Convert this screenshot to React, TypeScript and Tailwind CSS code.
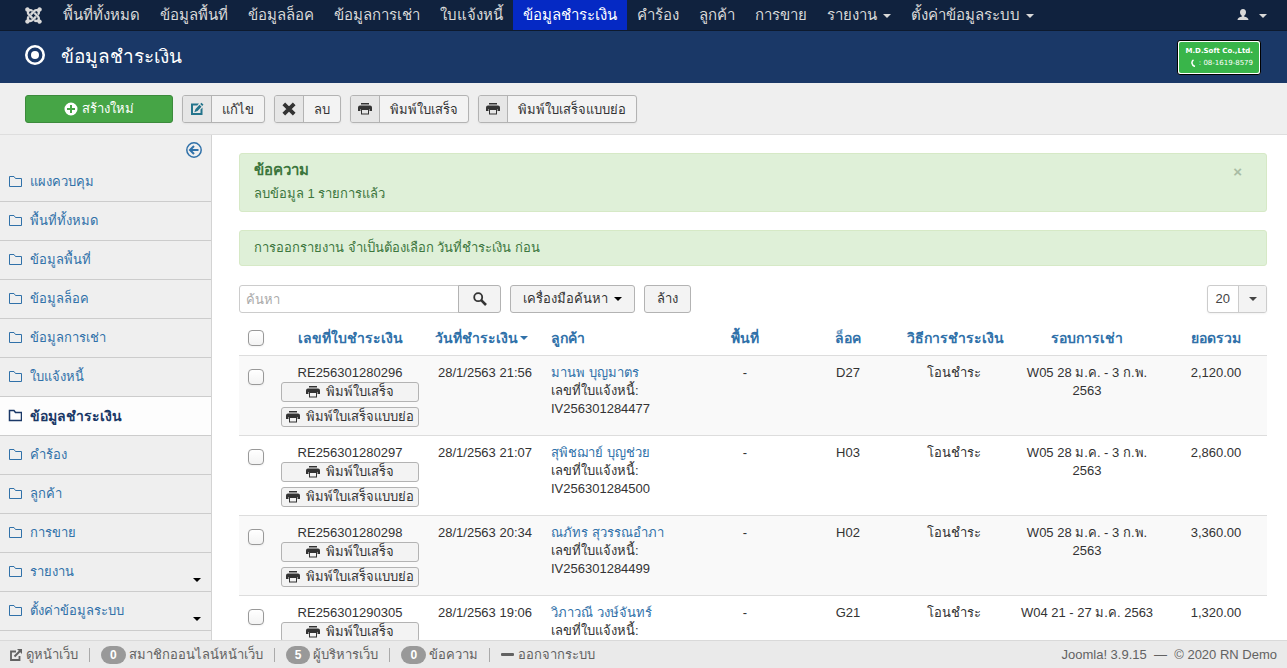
import type { ReactNode } from 'react';
import { FaJoomla } from 'react-icons/fa';

interface MenuItem {
  label: string;
  active?: boolean;
  dropdown?: boolean;
}

const menuItems: MenuItem[] = [
  { label: 'พื้นที่ทั้งหมด' },
  { label: 'ข้อมูลพื้นที่' },
  { label: 'ข้อมูลล็อค' },
  { label: 'ข้อมูลการเช่า' },
  { label: 'ใบแจ้งหนี้' },
  { label: 'ข้อมูลชำระเงิน', active: true },
  { label: 'คำร้อง' },
  { label: 'ลูกค้า' },
  { label: 'การขาย' },
  { label: 'รายงาน', dropdown: true },
  { label: 'ตั้งค่าข้อมูลระบบ', dropdown: true },
];

const sidebarItems: MenuItem[] = [{ label: 'แผงควบคุม' }, ...menuItems];

interface Payment {
  receipt: string;
  date: string;
  customer: string;
  invoice: string;
  lock: string;
  period: string;
  total: string;
}

const payments: Payment[] = [
  {
    receipt: 'RE256301280296',
    date: '28/1/2563 21:56',
    customer: 'มานพ บุญมาตร',
    invoice: 'IV256301284477',
    lock: 'D27',
    period: 'W05 28 ม.ค. - 3 ก.พ. 2563',
    total: '2,120.00',
  },
  {
    receipt: 'RE256301280297',
    date: '28/1/2563 21:07',
    customer: 'สุพิชฌาย์ บุญช่วย',
    invoice: 'IV256301284500',
    lock: 'H03',
    period: 'W05 28 ม.ค. - 3 ก.พ. 2563',
    total: '2,860.00',
  },
  {
    receipt: 'RE256301280298',
    date: '28/1/2563 20:34',
    customer: 'ณภัทร สุวรรณอำภา',
    invoice: 'IV256301284499',
    lock: 'H02',
    period: 'W05 28 ม.ค. - 3 ก.พ. 2563',
    total: '3,360.00',
  },
  {
    receipt: 'RE256301290305',
    date: '28/1/2563 19:06',
    customer: 'วิภาวณี วงษ์จันทร์',
    invoice: '',
    lock: 'G21',
    period: 'W04 21 - 27 ม.ค. 2563',
    total: '1,320.00',
  },
];

function Caret({ className = '' }: { className?: string }) {
  return (
    <svg className={`inline-block h-1 w-2 shrink-0 ${className}`} viewBox="0 0 8 4" fill="currentColor" aria-hidden="true">
      <path d="M0 0h8L4 4z" />
    </svg>
  );
}

function PrintIcon() {
  return (
    <svg className="h-3.5 w-3.5 shrink-0" viewBox="0 0 14 14" fill="currentColor" aria-hidden="true">
      <path d="M3 1h8v1.500H3z" />
      <path d="M2 3.500h10a2 2 0 0 1 2 2V9h-2.500V7h-9v2H0V5.500a2 2 0 0 1 2-2z" />
      <path fillRule="evenodd" d="M3 6.500h8V12.500H3zM4 8v3.500h6V8z" />
    </svg>
  );
}

function PlusIcon() {
  return (
    <svg className="h-3.5 w-3.5 shrink-0" viewBox="0 0 14 14" fill="currentColor" aria-hidden="true">
      <path fillRule="evenodd" d="M7 .5a6.500 6.500 0 1 1 0 13 6.500 6.500 0 0 1 0-13zM6 3v3H3v2h3v3h2V8h3V6H8V3z" />
    </svg>
  );
}

function EditIcon() {
  return (
    <svg className="h-3.5 w-3.5 shrink-0" viewBox="0 0 14 14" fill="currentColor" aria-hidden="true">
      <path d="M1 1.500h8L7.200 3.500H3v7.500h7.500V7.500l2-2V13H1z" />
      <path d="m11.500.8 2 2-1.300 1.300-2-2zM9.500 2.800l2 2L7.500 9l-3.200 1.200L5.500 7z" />
    </svg>
  );
}

function DeleteIcon() {
  return (
    <svg className="h-3.5 w-3.5 shrink-0" viewBox="0 0 14 14" aria-hidden="true">
      <path d="M1.800 1.800l10.400 10.400M12.200 1.800 1.800 12.200" stroke="currentColor" strokeWidth="3.800" />
    </svg>
  );
}

function SearchIcon() {
  return (
    <svg className="h-3.5 w-3.5 shrink-0" viewBox="0 0 14 14" fill="none" stroke="currentColor" aria-hidden="true">
      <circle cx="5.200" cy="5.200" r="4" strokeWidth="1.800" />
      <path d="m8.200 8.200 4.800 4.800" strokeWidth="2.600" />
    </svg>
  );
}

function BackIcon() {
  return (
    <svg className="h-4 w-4" viewBox="0 0 16 16" fill="none" stroke="currentColor" aria-hidden="true">
      <circle cx="8" cy="8" r="7.200" strokeWidth="1.500" />
      <path d="M12.500 8H4.500M8 4 4 8l4 4" strokeWidth="2" />
    </svg>
  );
}

function FolderIcon({ bold }: { bold?: boolean }) {
  return (
    <svg className="h-3.5 w-3.5 shrink-0" viewBox="0 0 14 14" fill="none" stroke="currentColor" strokeWidth={bold ? 1.5 : 1} aria-hidden="true">
      <path d="M1.500 11.500v-10h4.500l1.500 2h6v8z" />
    </svg>
  );
}

function UserIcon() {
  return (
    <svg className="h-3 w-3 shrink-0" viewBox="0 0 12 12" fill="currentColor" aria-hidden="true">
      <path d="M6 0c2 0 3 1.300 3 3.200C9 4.800 8.300 6 7.300 6.600v1.200c2.200.3 4.200 1.200 4.200 3.200H.5c0-2 2-2.900 4.200-3.200V6.600C3.700 6 3 4.800 3 3.200 3 1.300 4 0 6 0z" />
    </svg>
  );
}

function ExternalIcon() {
  return (
    <svg className="h-3 w-3 shrink-0" viewBox="0 0 12 12" fill="none" stroke="currentColor" aria-hidden="true">
      <path d="M6 2.500H1v8.500h8.500V7" strokeWidth="1.800" />
      <path d="M4.500 7.500 10 2" strokeWidth="2" />
      <path d="M7 0h5v5z" fill="currentColor" stroke="none" />
    </svg>
  );
}

function ToolbarButton({ icon, iconClass = '', children }: { icon: ReactNode; iconClass?: string; children: ReactNode }) {
  return (
    <button className="flex h-7 items-stretch overflow-hidden rounded-[3px] border border-[#b3b3b3] bg-[#f3f3f3] text-[13px] shadow-xs">
      <span className={`flex w-[29px] items-center justify-center border-r border-[#b3b3b3] bg-[#e6e6e6] ${iconClass}`}>{icon}</span>
      <span className="px-2.5 leading-7">{children}</span>
    </button>
  );
}

function PrintButton({ children }: { children: ReactNode }) {
  return (
    <button className="flex h-5 w-full items-center justify-center gap-1.5 rounded-[3px] border border-[#b3b3b3] bg-[#f3f3f3] text-[13px] leading-[18px] whitespace-nowrap">
      <PrintIcon />
      {children}
    </button>
  );
}

function Checkbox({ label }: { label: string }) {
  return (
    <input
      type="checkbox"
      aria-label={label}
      className="mx-auto block h-4 w-4 appearance-none rounded-[4px] border border-[#999] bg-linear-to-b from-white to-[#f3f3f3] shadow-xs"
    />
  );
}

function TopBar() {
  return (
    <nav className="flex h-[31px] shrink-0 items-stretch border-b border-[#0d1a2e] bg-[#10223e] text-[15px] leading-[30px] text-[#d9d9d9]">
      <a href="#" aria-label="Joomla" className="flex items-center pr-2.5 pl-6">
        <FaJoomla className="h-[19px] w-[19px]" />
      </a>
      {menuItems.map((item) => (
        <a
          key={item.label}
          href="#"
          className={`flex items-center px-2.5 whitespace-nowrap ${item.active ? 'bg-[#0529c4] text-white' : ''}`}
        >
          {item.label}
          {item.dropdown && <Caret className="mt-0.5 ml-1.5" />}
        </a>
      ))}
      <button aria-label="เมนูผู้ใช้" className="mr-5 ml-auto flex items-center gap-2.5">
        <UserIcon />
        <Caret className="mt-0.5" />
      </button>
    </nav>
  );
}

function Header() {
  return (
    <header className="flex h-[52px] shrink-0 items-center bg-[#1a3867] pr-[26px] pl-[25px] text-white">
      <svg className="mb-1 h-5 w-5" viewBox="0 0 20 20" aria-hidden="true">
        <circle cx="10" cy="10" r="8.700" fill="none" stroke="currentColor" strokeWidth="2.600" />
        <circle cx="10" cy="10" r="4" fill="currentColor" />
      </svg>
      <h1 className="ml-4 text-[19px] leading-9">ข้อมูลชำระเงิน</h1>
      <div className="ml-auto rounded-[3px] border border-black bg-white p-px">
        <div className="flex h-[31px] w-20 flex-col items-end justify-center rounded-[2px] bg-[#39b54a] pr-1.5 font-['DejaVu_Sans','Liberation_Sans',sans-serif] text-[7px] leading-3 whitespace-nowrap">
          <b>M.D.Soft Co.,Ltd.</b>
          <span className="flex items-center gap-px">
            <svg className="h-2 w-2" viewBox="0 0 8 8" fill="none" stroke="currentColor" aria-hidden="true">
              <path d="M3.500 1C1 2.500 1.500 6.500 5 7.500" strokeWidth="1.500" />
            </svg>
            : 08-1619-8579
          </span>
        </div>
      </div>
    </header>
  );
}

function Toolbar() {
  return (
    <div className="flex h-[52px] shrink-0 items-center gap-[9px] border-b border-[#dedede] bg-[#efefef] px-[25px]">
      <button className="flex h-7 w-[148px] items-center justify-center gap-1 rounded-[3px] border border-[#3c8a3c] bg-[#46a546] text-[13px] text-white">
        <PlusIcon />
        สร้างใหม่
      </button>
      <ToolbarButton icon={<EditIcon />} iconClass="text-[#24748c]">แก้ไข</ToolbarButton>
      <ToolbarButton icon={<DeleteIcon />}>ลบ</ToolbarButton>
      <ToolbarButton icon={<PrintIcon />}>พิมพ์ใบเสร็จ</ToolbarButton>
      <ToolbarButton icon={<PrintIcon />}>พิมพ์ใบเสร็จแบบย่อ</ToolbarButton>
    </div>
  );
}

function Sidebar() {
  return (
    <aside className="w-[212px] shrink-0 border-r border-[#d3d3d3] bg-[#efefef] text-[#3071a9]">
      <div className="flex justify-end pt-[7px] pr-[9px] pb-[5px]">
        <button aria-label="ซ่อนแถบข้าง">
          <BackIcon />
        </button>
      </div>
      <ul>
        {sidebarItems.map((item) => (
          <li key={item.label} className={`border-b border-[#ccc] ${item.active ? 'bg-[#fdfdfd] text-[14px] font-bold text-[#1a3867]' : ''}`}>
            <a href="#" className="flex h-[38px] items-center gap-2 pr-2.5 pl-2 leading-[18px]">
              <FolderIcon bold={item.active} />
              {item.label}
              {item.dropdown && <Caret className="mt-4 ml-auto text-black" />}
            </a>
          </li>
        ))}
      </ul>
    </aside>
  );
}

function SearchTools() {
  return (
    <form className="flex items-start">
      <input
        type="text"
        aria-label="ค้นหา"
        placeholder="ค้นหา"
        className="h-7 w-[220px] rounded-l-[3px] border border-[#ccc] px-1.5 placeholder:text-[#aaa]"
      />
      <button type="button" aria-label="ค้นหา" className="-ml-px flex h-7 w-[43px] items-center justify-center rounded-r-[3px] border border-[#b3b3b3] bg-[#f3f3f3]">
        <SearchIcon />
      </button>
      <button type="button" className="ml-[9px] flex h-7 items-center gap-1.5 rounded-[3px] border border-[#b3b3b3] bg-[#f3f3f3] px-3">
        เครื่องมือค้นหา
        <Caret className="text-black" />
      </button>
      <button type="button" className="ml-[9px] h-7 rounded-[3px] border border-[#b3b3b3] bg-[#f3f3f3] px-3">
        ล้าง
      </button>
      <button type="button" aria-label="จำนวนต่อหน้า" className="ml-auto flex h-7 items-stretch overflow-hidden rounded-[3px] border border-[#ccc] bg-white text-[#444] shadow-xs">
        <span className="px-2 leading-[26px]">20</span>
        <span className="flex w-7 items-center justify-center border-l border-[#ccc] bg-[#f3f3f3]">
          <Caret />
        </span>
      </button>
    </form>
  );
}

function PaymentTable() {
  return (
    <table className="mt-2 w-full table-fixed text-center">
      <colgroup>
        <col className="w-[34px]" />
        <col className="w-[154px]" />
        <col className="w-[116px]" />
        <col />
        <col className="w-[104px]" />
        <col className="w-[102px]" />
        <col className="w-[110px]" />
        <col className="w-[156px]" />
        <col className="w-[102px]" />
      </colgroup>
      <thead className="text-[14px] leading-[18px] text-[#3071a9]">
        <tr className="[&>th]:px-2 [&>th]:py-2 [&>th]:whitespace-nowrap">
          <th><Checkbox label="เลือกทั้งหมด" /></th>
          <th><a href="#">เลขที่ใบชำระเงิน</a></th>
          <th>
            <a href="#" className="flex items-center gap-0.5">วันที่ชำระเงิน<Caret /></a>
          </th>
          <th className="text-left"><a href="#">ลูกค้า</a></th>
          <th><a href="#">พื้นที่</a></th>
          <th><a href="#">ล็อค</a></th>
          <th><a href="#">วิธีการชำระเงิน</a></th>
          <th><a href="#">รอบการเช่า</a></th>
          <th><a href="#">ยอดรวม</a></th>
        </tr>
      </thead>
      <tbody>
        {payments.map((payment) => (
          <tr key={payment.receipt} className="border-t border-[#ddd] align-top odd:bg-[#f9f9f9] [&>td]:p-2">
            <td>
              <div className="pt-[5px]">
                <Checkbox label={payment.receipt} />
              </div>
            </td>
            <td>
              {payment.receipt}
              <div className="flex flex-col gap-[5px]">
                <PrintButton>พิมพ์ใบเสร็จ</PrintButton>
                <PrintButton>พิมพ์ใบเสร็จแบบย่อ</PrintButton>
              </div>
            </td>
            <td className="whitespace-nowrap">{payment.date}</td>
            <td className="text-left">
              <a href="#" className="text-[#3071a9]">{payment.customer}</a>
              <br />
              เลขที่ใบแจ้งหนี้: {payment.invoice}
            </td>
            <td>-</td>
            <td>{payment.lock}</td>
            <td>โอนชำระ</td>
            <td>{payment.period}</td>
            <td>{payment.total}</td>
          </tr>
        ))}
      </tbody>
    </table>
  );
}

function CountBadge({ children }: { children: ReactNode }) {
  return <span className="rounded-full bg-[#999] px-[9px] text-[12px] leading-[18px] font-bold text-white">{children}</span>;
}

function Divider() {
  return <span className="mx-[11px] h-3.5 border-l border-[#aaa]" />;
}

function StatusBar() {
  return (
    <footer className="flex h-7 shrink-0 items-center border-t border-[#d9d9d9] bg-[#eaeaea] px-2.5 text-[13px] leading-[18px] whitespace-nowrap text-[#626262]">
      <a href="#" className="flex items-center gap-1"><ExternalIcon />ดูหน้าเว็บ</a>
      <Divider />
      <span className="flex items-center gap-[3px]"><CountBadge>0</CountBadge>สมาชิกออนไลน์หน้าเว็บ</span>
      <Divider />
      <span className="flex items-center gap-[3px]"><CountBadge>5</CountBadge>ผู้บริหารเว็บ</span>
      <Divider />
      <a href="#" className="flex items-center gap-[3px]"><CountBadge>0</CountBadge>ข้อความ</a>
      <Divider />
      <a href="#" className="flex items-center gap-1"><span className="h-[3px] w-[13px] rounded-[1px] bg-[#626262]" />ออกจากระบบ</a>
      <span className="ml-auto">Joomla! 3.9.15 &nbsp;—&nbsp; © 2020 RN Demo</span>
    </footer>
  );
}

export default function App() {
  return (
    <div className="flex h-screen flex-col overflow-hidden bg-white font-['Liberation_Sans',Arial,sans-serif] text-[13px] leading-[18px] text-[#333]">
      <TopBar />
      <Header />
      <Toolbar />
      <div className="flex min-h-0 flex-1 overflow-hidden">
        <Sidebar />
        <main className="min-w-0 flex-1 px-5 pt-[18px] pl-[27px]">
          <div role="alert" className="flex items-start rounded-[3px] border border-[#d6e9c6] bg-[#dff0d8] px-3.5 pt-[7px] pb-2 text-[#3c763d]">
            <div className="flex-1">
              <h4 className="text-[15px] leading-[18px] font-bold">ข้อความ</h4>
              <p className="mt-1.5">ลบข้อมูล 1 รายการแล้ว</p>
            </div>
            <button aria-label="ปิด" className="mr-2.5 pt-0.5 text-[15px] leading-[18px] font-bold text-[#a9bca4]">×</button>
          </div>
          <div className="mt-[18px] mb-[19px] rounded-[3px] border border-[#d6e9c6] bg-[#dff0d8] px-3.5 py-2 text-[#3c763d]">
            การออกรายงาน จำเป็นต้องเลือก วันที่ชำระเงิน ก่อน
          </div>
          <SearchTools />
          <PaymentTable />
        </main>
      </div>
      <StatusBar />
    </div>
  );
}
